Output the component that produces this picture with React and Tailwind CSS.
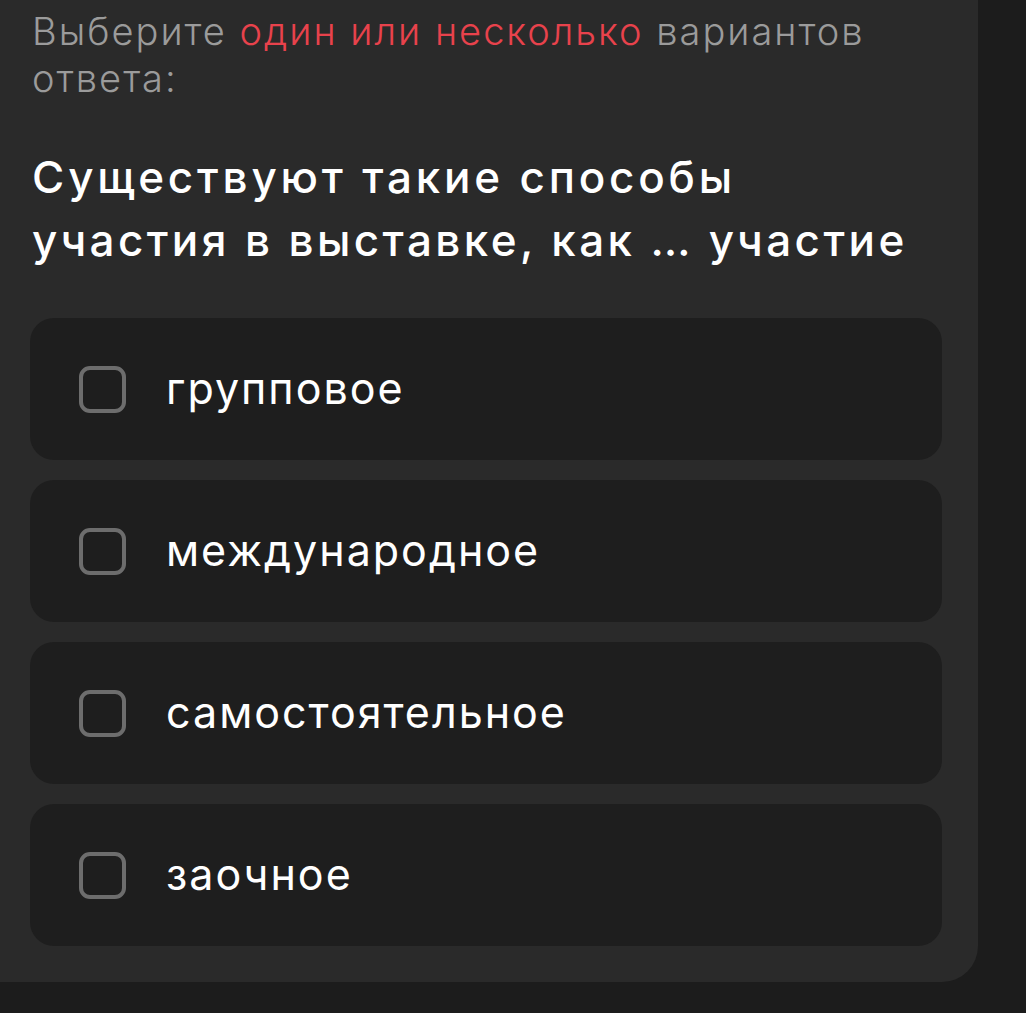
export default function App() {
  const options = ["групповое", "международное", "самостоятельное", "заочное"];
  return (
    <div className="w-[1026px] h-[1013px] bg-[#1c1c1c] overflow-hidden" style={{ fontFamily: "Inter, 'Open Sans', sans-serif" }}>
      <div className="w-[978px] h-[982px] bg-[#2a2a2a] rounded-br-[36px] pl-[30px] pr-[36px] pt-[8px] flex flex-col">
        <p className="pl-[2px] text-[38px] leading-[47px] font-light tracking-[2px] text-[#9b9b9b]">
          <span>Выберите</span> <span className="text-[#e8424c]">один или несколько</span> <span>вариантов</span>
          <br />
          <span>ответа:</span>
        </p>
        <h1 className="pl-[2px] mt-[44px] text-[44px] leading-[63px] font-medium tracking-[3.8px] text-white whitespace-nowrap">
          <span>Существуют такие способы</span>
          <br />
          <span className="tracking-[3.4px]">участия в выставке, как … участие</span>
        </h1>
        <div className="mt-[46px] flex flex-col gap-[20px]">
          {options.map((o) => (
            <div key={o} className="h-[142px] rounded-[24px] bg-[#1e1e1e] flex items-center pl-[49px]">
              <div className="w-[47px] h-[47px] rounded-[11px] border-[4px] border-[#6d6d6d] shrink-0" />
              <span className="ml-[40px] text-[43px] text-white font-normal tracking-[2px] leading-none pb-[2px]">{o}</span>
            </div>
          ))}
        </div>
      </div>
    </div>
  );
}
